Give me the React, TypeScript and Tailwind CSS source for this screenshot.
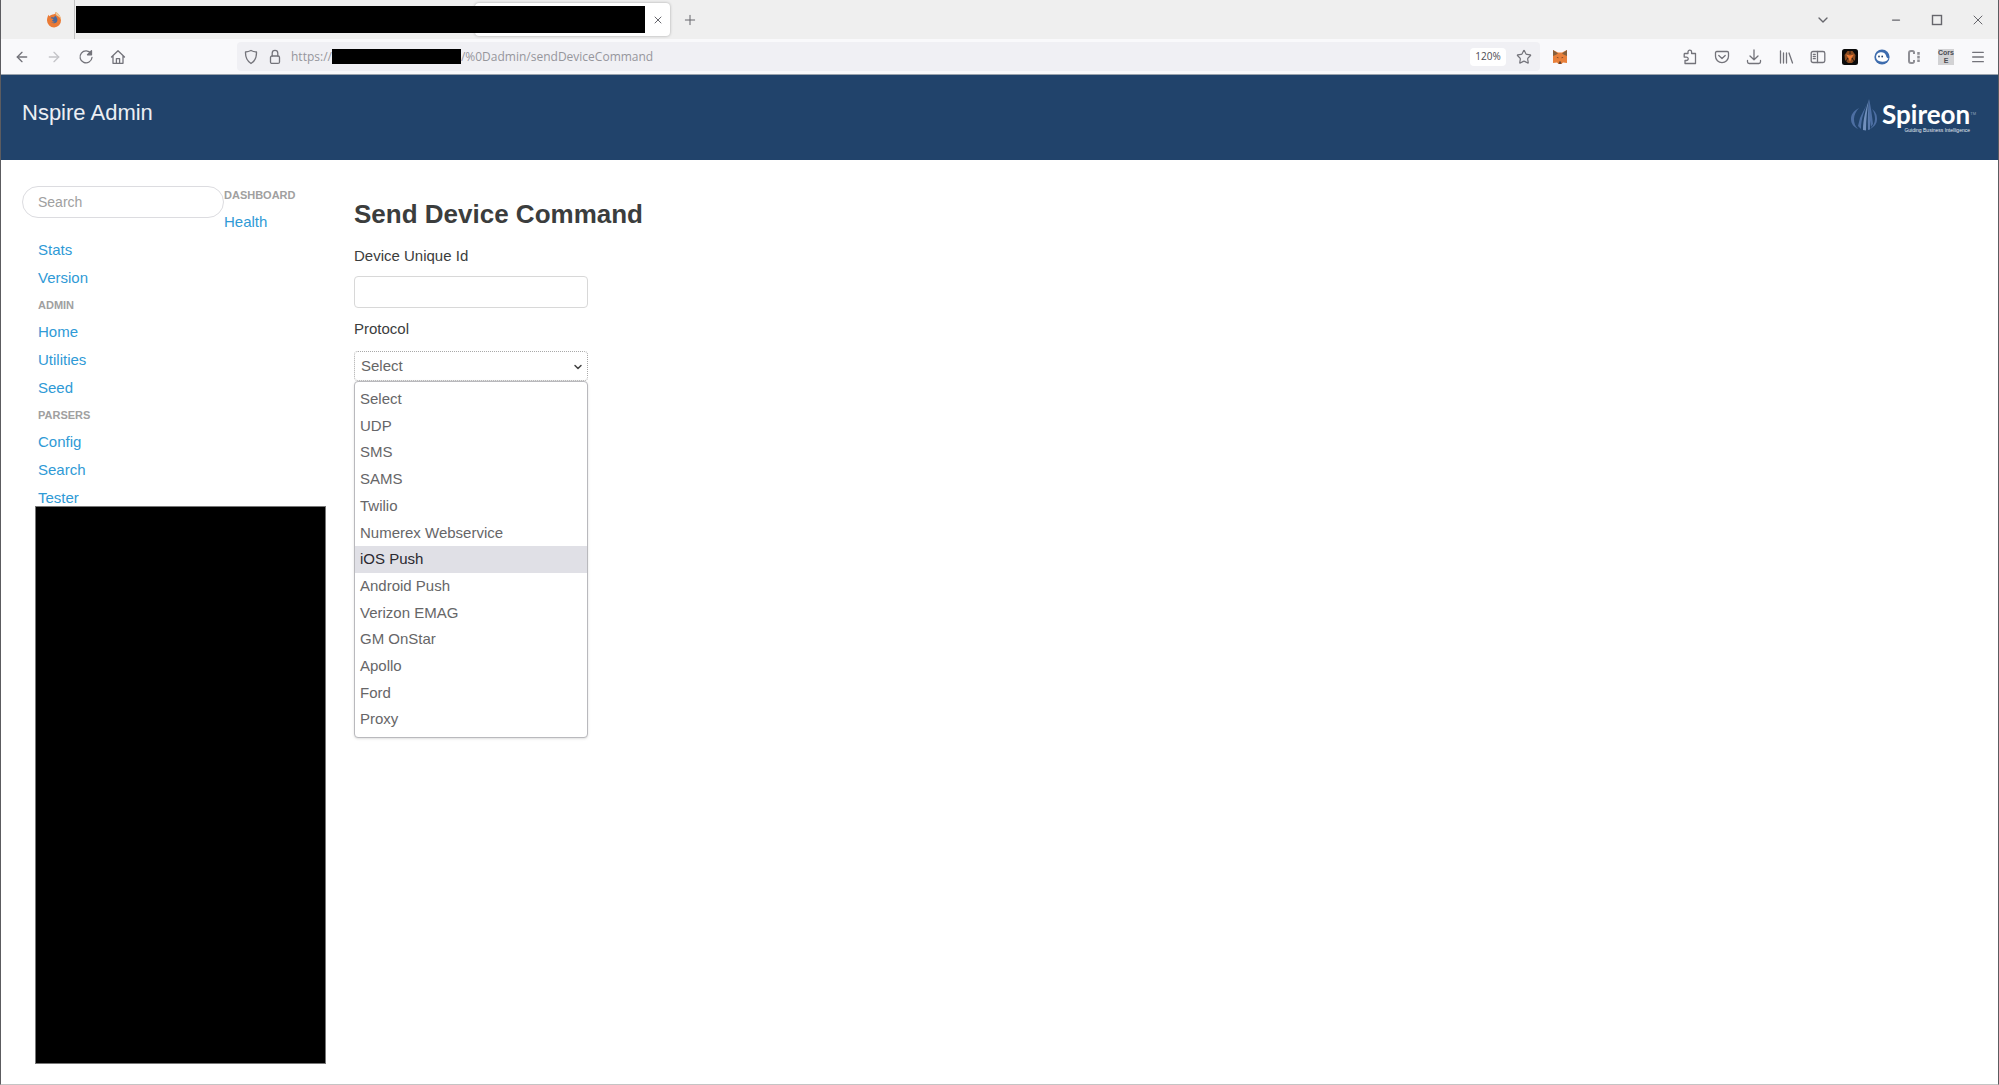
import type { ReactNode } from "react";
import { ArrowLeft, ArrowRight, ChevronDown, Menu, Minus, Plus, Star, X } from "lucide-react";

const protocols = [
  "Select",
  "UDP",
  "SMS",
  "SAMS",
  "Twilio",
  "Numerex Webservice",
  "iOS Push",
  "Android Push",
  "Verizon EMAG",
  "GM OnStar",
  "Apollo",
  "Ford",
  "Proxy",
];

const dashboardNav = [
  { label: "Dashboard", heading: true },
  { label: "Health" },
];

const mainNav = [
  { label: "Stats" },
  { label: "Version" },
  { label: "Admin", heading: true },
  { label: "Home" },
  { label: "Utilities" },
  { label: "Seed" },
  { label: "Parsers", heading: true },
  { label: "Config" },
  { label: "Search" },
  { label: "Tester" },
];

function IconButton({ label, children, className = "" }: { label: string; children: ReactNode; className?: string }) {
  return (
    <button type="button" aria-label={label} className={`flex size-8 shrink-0 items-center justify-center ${className}`}>
      {children}
    </button>
  );
}

function LineIcon({ children }: { children: ReactNode }) {
  return (
    <svg
      viewBox="0 0 16 16"
      className="size-4"
      fill="none"
      stroke="currentColor"
      strokeWidth="1.3"
      strokeLinecap="round"
      strokeLinejoin="round"
    >
      {children}
    </svg>
  );
}

function FirefoxIcon() {
  return (
    <svg viewBox="0 0 16 16" className="size-4">
      <path d="M8 2.2c1-.2 1.4-1.2 1.4-2.2 2.6 1 5.6 4 5.6 8.2A7 7 0 0 1 1 8.6C1 6 1.8 4 2.6 2.8l.6 1.5C4.4 3 6 2.6 8 2.2z" fill="#ea7a35" />
      <path d="M9.4 0c2.6 1 5.6 4 5.6 8.2-.8-2.600-2-3.600-4-4.400C9.800 3 9.200 1.600 9.400 0z" fill="#eccb9c" />
      <path d="M5 5.600c1.400-.6 2.200 0 3-.2l1-1.600c1.600 1 2.600 2.600 2.400 4.400-.2 2-1.800 3.200-3.600 3-1.800 0-3-1.400-2.800-3z" fill="#49699d" />
      <path d="M4 6.400c1.400-.4 2.600.2 3.600 1L6 8.600c.4 1 1.600 1.400 2.800.8-.8 1.800-4.400 1.800-4.800-3z" fill="#ea7a35" />
    </svg>
  );
}

function FoxIcon() {
  return (
    <svg viewBox="0 0 16 16" className="size-4">
      <path d="M1 1l5 2.500h4L15 1v13l-4-.5-1.500 1.500h-3L5 13.500 1 14z" fill="#e8803a" />
      <path d="M1 1l5 3.500L3.500 6 1 7zM15 1l-5 3.500L12.500 6 15 7z" fill="#86603c" />
      <path d="M4.500 8h1.800v1.500zM11.500 8H9.700v1.500z" fill="#7a4426" />
      <path d="M7 12.500h2l.4 2.500H6.600z" fill="#6b4630" />
    </svg>
  );
}

function SpireonLogo() {
  return (
    <div className="flex text-white">
      <svg viewBox="0 0 28 34" className="mr-1 h-[34px] w-7" fill="none">
        <path d="M9 10C3 13 1 17 1 21c0 5 3 8 7 10-3-3-4-6-4-10s2-8 5-11z" fill="#4d6fa3" />
        <path d="M22 11c4 3 5 6 5 10 0 5-3 8-7 10 3-3 5-6 5-10s-1-7-3-10z" fill="#4d6fa3" />
        <path d="M19 1c-2 6-6 12-9 19l-2 8 3 3c0-11 4-20 8-30z" fill="#4d6fa3" />
        <path d="M19 1c-3 10-6 20-6 31l3 .5c0-11 1-21 3-31.500z" fill="#7290bd" />
        <path d="M19 1c-1 10-1.500 21-1 31l2-.5c0-10 0-20-1-30.500z" fill="#5b7bad" />
        <path d="M19 1c0 10 .5 20 2 28l2-3c-1-8-2-17-4-25z" fill="#4d6fa3" />
      </svg>
      <div className="flex flex-col items-end pt-0.5">
        <div className="flex">
          <span className="font-[Lato,sans-serif] text-[26px] leading-7 font-bold">Spireon</span>
          <span className="text-[4px] leading-7 text-slate-400">TM</span>
        </div>
        <span className="mr-1.5 text-[5px] leading-[5px] text-slate-200">Guiding Business Intelligence</span>
      </div>
    </div>
  );
}

function TabStrip() {
  return (
    <div className="flex h-[39px] shrink-0 items-center bg-[#efefef] text-[#66666c]">
      <div className="flex h-full w-[74px] items-center justify-end border-r border-[#c3c3c3] pr-3">
        <FirefoxIcon />
      </div>
      <div className="ml-px h-[27px] w-[399px] bg-black" />
      <div className="flex h-[33px] w-[195px] items-center rounded bg-white shadow-[0_0_3px_rgba(0,0,0,0.3)]">
        <div className="h-[27px] flex-1 bg-black" />
        <button type="button" aria-label="Close tab" className="flex w-[25px] items-center justify-center">
          <X className="size-3" strokeWidth={2} />
        </button>
      </div>
      <IconButton label="New tab" className="ml-1">
        <Plus className="size-4" strokeWidth={1.5} />
      </IconButton>
      <div className="ml-auto flex items-center">
        <IconButton label="List all tabs" className="mr-9">
          <ChevronDown className="size-4" strokeWidth={2} />
        </IconButton>
        <button type="button" aria-label="Minimize" className="flex h-8 w-[41px] items-center justify-center">
          <Minus className="size-3" strokeWidth={2.5} />
        </button>
        <button type="button" aria-label="Maximize" className="flex h-8 w-[41px] items-center justify-center">
          <svg viewBox="0 0 12 12" className="size-3" fill="none" stroke="currentColor" strokeWidth="1.4">
            <rect x="1.500" y="1.500" width="9" height="9" />
          </svg>
        </button>
        <button type="button" aria-label="Close" className="flex h-8 w-[41px] items-center justify-center">
          <X className="size-4" strokeWidth={1.5} />
        </button>
      </div>
    </div>
  );
}

function Toolbar() {
  return (
    <div className="flex h-9 shrink-0 items-center border-b border-[#9aa3ad] bg-[#f9f9fb] pl-[5px] text-[#73737a]">
      <IconButton label="Back">
        <ArrowLeft className="size-4" strokeWidth={2} />
      </IconButton>
      <IconButton label="Forward" className="text-[#c4c4c8]">
        <ArrowRight className="size-4" strokeWidth={2} />
      </IconButton>
      <IconButton label="Reload">
        <LineIcon>
          <path d="M13 4.500A6 6 0 1 0 14 8.500" />
          <path d="M13.500 1.800v4h-4z" fill="currentColor" />
        </LineIcon>
      </IconButton>
      <IconButton label="Home">
        <LineIcon>
          <path d="M1.500 8L8 1.800 14.500 8M3 7v7.300h10V7M6.400 14V9.600h3.200V14" />
        </LineIcon>
      </IconButton>

      <div className="ml-[103px] flex h-[29px] flex-1 items-center rounded bg-[#f0f0f4] font-['Open_Sans',sans-serif] text-xs text-[#96969c]">
        <div className="flex w-[54px] items-center gap-2 pl-1.5 text-[#73737a]">
          <LineIcon>
            <path d="M8 1.500c2 1 3.800 1.400 5.500 1.500.2 5-1.300 9-5.500 11.500C3.800 12 2.300 8 2.500 3 4.200 2.900 6 2.500 8 1.500z" />
          </LineIcon>
          <LineIcon>
            <rect x="3.500" y="7" width="9" height="7.400" rx="1.500" />
            <path d="M5.200 7V4.200a2.800 2.800 0 0 1 5.600 0V7" />
          </LineIcon>
        </div>
        <span>https://</span>
        <div className="h-[15px] w-[129px] bg-black" />
        <span>/%0Dadmin/sendDeviceCommand</span>
        <button type="button" className="ml-auto h-[18px] w-9 rounded-sm bg-white text-[10px] text-[#4b4b52]">
          120%
        </button>
        <IconButton label="Bookmark this page" className="ml-0.5 text-[#73737a]">
          <Star className="size-4" strokeWidth={1.8} />
        </IconButton>
      </div>

      <IconButton label="MetaMask" className="mr-[98px] ml-1">
        <FoxIcon />
      </IconButton>

      <div className="flex items-center pr-1">
        <IconButton label="Extensions">
          <LineIcon>
            <path d="M3 4.500h3V3a1.800 1.800 0 0 1 3.600 0v1.500H13.500v10H3v-3h1.500a1.700 1.700 0 0 0 0-3.400H2.200V5.300c0-.5.3-.8.8-.8z" />
          </LineIcon>
        </IconButton>
        <IconButton label="Save to Pocket">
          <LineIcon>
            <path d="M2.800 2.500h10.400c.8 0 1.300.5 1.300 1.300v3.400a6.500 6.500 0 0 1-13 0V3.800c0-.8.5-1.300 1.300-1.300z" />
            <path d="M4.800 6.500L8 9.500l3.200-3" />
          </LineIcon>
        </IconButton>
        <IconButton label="Downloads">
          <LineIcon>
            <path d="M8 1v9.500M4 7l4 3.800L12 7M1.500 11.500v1.300c0 1 .6 1.700 1.700 1.700h9.600c1 0 1.700-.7 1.700-1.700v-1.300" />
          </LineIcon>
        </IconButton>
        <IconButton label="Library">
          <LineIcon>
            <path d="M2.500 2v12M5.500 4v10M8.500 4v10M11 4l3.500 10" />
          </LineIcon>
        </IconButton>
        <IconButton label="Sidebars">
          <LineIcon>
            <rect x="1.200" y="2.500" width="13.600" height="11" rx="1.800" />
            <path d="M7.500 2.500v11M3.300 5.300h2M3.300 7.500h2M3.300 9.700h2" />
          </LineIcon>
        </IconButton>
        <IconButton label="Web inspector">
          <svg viewBox="0 0 16 16" className="size-4">
            <rect width="16" height="16" rx="2.500" fill="#0b0b0b" />
            <path d="M5.500 2h5l3 4-.5 5-3 3H6l-3-3-.5-5z" fill="#8a4c22" />
            <path d="M4 5.500l4 1 4-1-2.500 3.500L8 13 6.500 9z" fill="#f07c35" />
            <path d="M8 2v3M4 12l2-3M12 12l-2-3" stroke="#2c1a10" />
          </svg>
        </IconButton>
        <IconButton label="Ghost mode">
          <svg viewBox="0 0 16 16" className="size-4">
            <circle cx="8" cy="8" r="7.600" fill="#3d6cae" />
            <path d="M2 8a5.200 5.200 0 0 1 10-1.500c.4 1.200.6 2.400 2.400 3-1 2.800-3.400 3.300-6.200 3.200C4.500 12.600 2.200 11 2 8z" fill="#fff" />
            <circle cx="5" cy="7.500" r=".9" fill="#26446f" />
            <circle cx="8.200" cy="7.500" r=".9" fill="#26446f" />
          </svg>
        </IconButton>
        <IconButton label="Cookie editor">
          <svg viewBox="0 0 16 16" className="size-4" fill="none" stroke="#8f8f95" strokeWidth="2">
            <path d="M8 5V3.500A1.500 1.500 0 0 0 6.500 2H5a2 2 0 0 0-2 2v8a2 2 0 0 0 2 2h1.500A1.500 1.500 0 0 0 8 12.500V11" />
            <path d="M12.500 3v10" strokeWidth="2.500" strokeDasharray="2.700 1" />
          </svg>
        </IconButton>
        <IconButton label="CORS">
          <span className="flex size-4 flex-col items-center bg-[#d2d2d4] text-[7px] leading-2 font-bold text-[#4b4b52]">
            <span>Cors</span>
            <span>E</span>
          </span>
        </IconButton>
        <IconButton label="Menu">
          <Menu className="size-4" strokeWidth={2} />
        </IconButton>
      </div>
    </div>
  );
}

function NavList({ items }: { items: { label: string; heading?: boolean }[] }) {
  return (
    <ul>
      {items.map((item) =>
        item.heading ? (
          <li key={item.label} className="text-[11px] leading-[26px] font-bold text-[#a0a0a0] uppercase">
            {item.label}
          </li>
        ) : (
          <li key={item.label} className="text-[15px] leading-7">
            <a href="#" className="text-[#2f9ad6]">
              {item.label}
            </a>
          </li>
        )
      )}
    </ul>
  );
}

export default function App() {
  return (
    <div className="flex min-h-screen flex-col border-x border-b border-x-[#5c5c60] border-b-[#c4c4c4] bg-white font-['Liberation_Sans',Arial,sans-serif] text-[15px] text-[#3b3d3d]">
      <TabStrip />
      <Toolbar />

      <header className="flex h-[85px] shrink-0 items-start justify-between bg-[#21436b] pr-[22px] pl-[21px]">
        <a href="#" className="pt-6 text-[22px] leading-7 text-[#eceff3]">
          Nspire Admin
        </a>
        <div className="pt-[23px]">
          <SpireonLogo />
        </div>
      </header>

      <div className="flex flex-1">
        {/* Sidebar */}
        <aside className="flex w-[353px] shrink-0 flex-col pt-[22px] pb-5 pl-[21px]">
          <div className="flex">
            <input
              type="search"
              aria-label="Search"
              placeholder="Search"
              className="mt-1 h-8 w-[202px] rounded-full border border-[#dcdce0] px-[15px] text-sm placeholder:text-[#a0a0a0]"
            />
            <NavList items={dashboardNav} />
          </div>
          <nav className="pl-4">
            <NavList items={mainNav} />
          </nav>
          <div className="-mt-1.5 ml-[13px] w-[291px] flex-1 border border-[#777] bg-black" />
        </aside>

        {/* Command form */}
        <main className="pt-9">
          <h1 className="text-[26px] leading-9 font-bold">Send Device Command</h1>
          <form className="w-[234px] pt-3">
            <label htmlFor="device-id" className="block leading-6">
              Device Unique Id
            </label>
            <input id="device-id" type="text" className="mt-2 block h-8 w-full rounded border border-[#d8d8d8] px-1.5" />
            <label htmlFor="protocol" className="mt-[9px] block leading-6">
              Protocol
            </label>
            <div className="relative mt-2.5">
              <select
                id="protocol"
                defaultValue="Select"
                className="block h-[30px] w-full appearance-none rounded border border-dotted border-[#a8a8a8] bg-white px-1.5 text-[#666]"
              >
                {protocols.map((name) => (
                  <option key={name}>{name}</option>
                ))}
              </select>
              <ChevronDown className="pointer-events-none absolute top-2.5 right-1 size-3 text-[#444]" strokeWidth={3} />
              <ul
                role="listbox"
                aria-label="Protocol options"
                className="absolute top-full left-0 flex h-[357px] w-full flex-col rounded-sm border border-[#b9b9bd] bg-white py-1 shadow-sm"
              >
                {protocols.map((name) => (
                  <li
                    key={name}
                    role="option"
                    aria-selected={name === "iOS Push"}
                    className="flex flex-1 items-center px-[5px] text-[#666668] aria-selected:bg-[#e0e0e6] aria-selected:text-[#2a2930]"
                  >
                    {name}
                  </li>
                ))}
              </ul>
            </div>
          </form>
        </main>
      </div>
    </div>
  );
}
